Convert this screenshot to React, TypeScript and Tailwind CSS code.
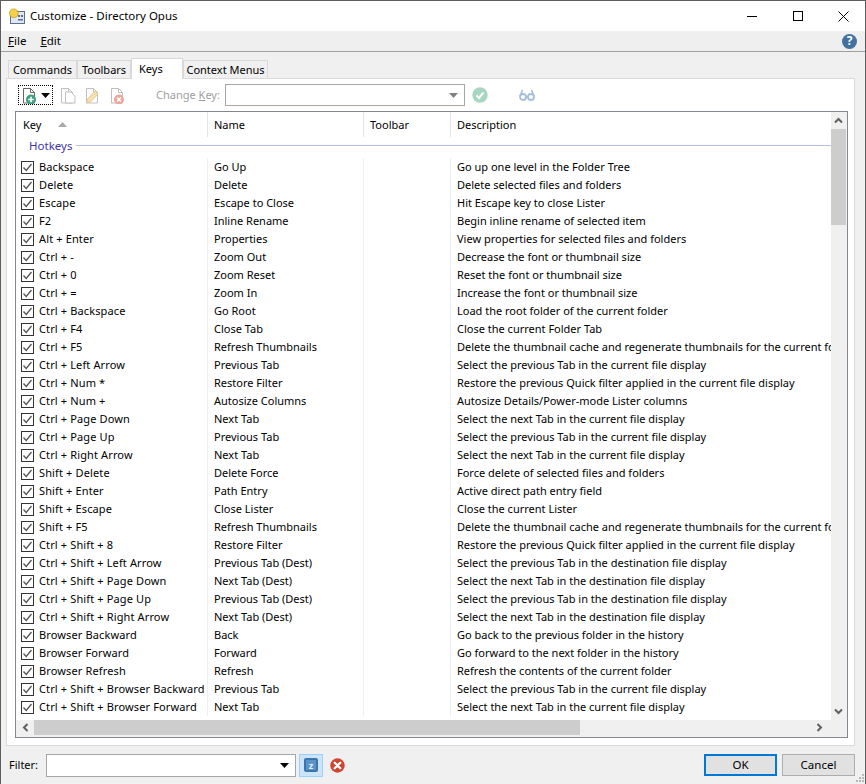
import type { ReactNode } from 'react'

const rows: [string, string, string][] = [
  ['Backspace', 'Go Up', 'Go up one level in the Folder Tree'],
  ['Delete', 'Delete', 'Delete selected files and folders'],
  ['Escape', 'Escape to Close', 'Hit Escape key to close Lister'],
  ['F2', 'Inline Rename', 'Begin inline rename of selected item'],
  ['Alt + Enter', 'Properties', 'View properties for selected files and folders'],
  ['Ctrl + -', 'Zoom Out', 'Decrease the font or thumbnail size'],
  ['Ctrl + 0', 'Zoom Reset', 'Reset the font or thumbnail size'],
  ['Ctrl + =', 'Zoom In', 'Increase the font or thumbnail size'],
  ['Ctrl + Backspace', 'Go Root', 'Load the root folder of the current folder'],
  ['Ctrl + F4', 'Close Tab', 'Close the current Folder Tab'],
  ['Ctrl + F5', 'Refresh Thumbnails', 'Delete the thumbnail cache and regenerate thumbnails for the current folder'],
  ['Ctrl + Left Arrow', 'Previous Tab', 'Select the previous Tab in the current file display'],
  ['Ctrl + Num *', 'Restore Filter', 'Restore the previous Quick filter applied in the current file display'],
  ['Ctrl + Num +', 'Autosize Columns', 'Autosize Details/Power-mode Lister columns'],
  ['Ctrl + Page Down', 'Next Tab', 'Select the next Tab in the current file display'],
  ['Ctrl + Page Up', 'Previous Tab', 'Select the previous Tab in the current file display'],
  ['Ctrl + Right Arrow', 'Next Tab', 'Select the next Tab in the current file display'],
  ['Shift + Delete', 'Delete Force', 'Force delete of selected files and folders'],
  ['Shift + Enter', 'Path Entry', 'Active direct path entry field'],
  ['Shift + Escape', 'Close Lister', 'Close the current Lister'],
  ['Shift + F5', 'Refresh Thumbnails', 'Delete the thumbnail cache and regenerate thumbnails for the current folder'],
  ['Ctrl + Shift + 8', 'Restore Filter', 'Restore the previous Quick filter applied in the current file display'],
  ['Ctrl + Shift + Left Arrow', 'Previous Tab (Dest)', 'Select the previous Tab in the destination file display'],
  ['Ctrl + Shift + Page Down', 'Next Tab (Dest)', 'Select the next Tab in the destination file display'],
  ['Ctrl + Shift + Page Up', 'Previous Tab (Dest)', 'Select the previous Tab in the destination file display'],
  ['Ctrl + Shift + Right Arrow', 'Next Tab (Dest)', 'Select the next Tab in the destination file display'],
  ['Browser Backward', 'Back', 'Go back to the previous folder in the history'],
  ['Browser Forward', 'Forward', 'Go forward to the next folder in the history'],
  ['Browser Refresh', 'Refresh', 'Refresh the contents of the current folder'],
  ['Ctrl + Shift + Browser Backward', 'Previous Tab', 'Select the previous Tab in the current file display'],
  ['Ctrl + Shift + Browser Forward', 'Next Tab', 'Select the next Tab in the current file display'],
]

function Tab({ label, active, className }: { label: string; active?: boolean; className: string }) {
  if (active) {
    return (
      <div className={`${className} h-[21px] -mb-px z-10 border border-b-0 border-[#d9d9d9] bg-white pl-[7px] pt-[1px] leading-[17px]`}>
        {label}
      </div>
    )
  }
  return (
    <div className={`${className} h-[18px] border border-b-0 border-[#d9d9d9] bg-[#f0f0f0] text-center leading-[18px]`}>
      {label}
    </div>
  )
}

function Check() {
  return (
    <svg width="13" height="13" viewBox="0 0 13 13" className="shrink-0">
      <rect x="0.5" y="0.5" width="12" height="12" fill="#fff" stroke="#333" />
      <path d="M2.5 6.5 L5.2 9.5 L10.5 3" fill="none" stroke="#555" strokeWidth="1.3" />
    </svg>
  )
}

function DocIcon({ stroke, children }: { stroke: string; children?: ReactNode }) {
  return (
    <svg width="16" height="18" viewBox="0 -1 16 18" className="shrink-0">
      <path d="M1.5 1.5 H8.5 L12.5 5.5 V16 H1.5 Z M8.5 1.5 V5.5 H12.5" fill="#fff" stroke={stroke} />
      {children}
    </svg>
  )
}

function RedCross({ size }: { size: number }) {
  return (
    <svg width={size} height={size} viewBox="0 0 16 16" className="shrink-0">
      <circle cx="8" cy="8" r="7.7" fill="#d0452f" />
      <path d="M5 5 L11 11 M11 5 L5 11" stroke="#fff" strokeWidth="2.4" strokeLinecap="round" />
    </svg>
  )
}

function Caret({ color = '#000' }: { color?: string }) {
  return (
    <svg width="9" height="5" viewBox="0 0 9 5" className="shrink-0">
      <path d="M0 0 H9 L4.5 5 Z" fill={color} />
    </svg>
  )
}

function Chevron({ d }: { d: string }) {
  return (
    <svg width="9" height="9" viewBox="0 0 9 9">
      <path d={d} fill="none" stroke="#606060" strokeWidth="2" />
    </svg>
  )
}

export default function App() {
  return (
    <div
      className="relative flex h-[784px] w-[866px] flex-col overflow-hidden border border-b-0 border-[#5e5e5e] bg-[#f0f0f0] text-[11px] text-black"
      style={{ fontFamily: '"Noto Sans", sans-serif' }}
    >
      {/* Title bar */}
      <div className="flex h-[30px] shrink-0 items-center bg-white pl-[8px]">
        <svg width="17" height="17" viewBox="0 0 17 17" className="shrink-0">
          <rect x="1.5" y="3.5" width="14" height="12" fill="#dfe7f3" stroke="#5b6f92" />
          <rect x="9" y="7" width="2" height="2" fill="#5b6f92" />
          <rect x="12" y="7" width="2" height="2" fill="#5b6f92" />
          <rect x="9" y="11" width="5" height="1.5" fill="#5b6f92" />
          <circle cx="4.8" cy="5.3" r="4.4" fill="#f4cf4a" stroke="#c79a1e" strokeWidth="0.7" />
        </svg>
        <span className="ml-[4px] text-[11.5px]">Customize - Directory Opus</span>
        <div className="ml-auto flex items-center">
          <div className="flex h-[30px] w-[46px] items-center justify-center">
            <div className="h-px w-[10px] bg-black" />
          </div>
          <div className="flex h-[30px] w-[46px] items-center justify-center">
            <div className="h-[10px] w-[10px] border border-black" />
          </div>
          <div className="flex h-[30px] w-[44px] items-center justify-center">
            <svg width="11" height="11" viewBox="0 0 11 11">
              <path d="M0.5 0.5 L10.5 10.5 M10.5 0.5 L0.5 10.5" stroke="#000" />
            </svg>
          </div>
        </div>
      </div>

      {/* Menu bar */}
      <div className="box-content flex h-[20px] shrink-0 items-center border-b border-[#a0a0a0] bg-[#efefef] pl-[7px] pr-[8px] text-[11.5px]">
        <span className="mr-[14px]"><span className="underline">F</span>ile</span>
        <span><span className="underline">E</span>dit</span>
        <div className="ml-auto flex h-[15px] w-[15px] items-center justify-center rounded-full bg-[#44729f] text-[12px] font-bold leading-none text-white">
          ?
        </div>
      </div>

      {/* Tabs */}
      <div className="flex h-[26px] shrink-0 items-end pl-[7px]">
        <Tab label="Commands" className="w-[69px]" />
        <Tab label="Toolbars" className="w-[54px]" />
        <Tab label="Keys" active className="w-[52px]" />
        <Tab label="Context Menus" className="w-[85px]" />
      </div>

      {/* Tab panel */}
      <div className="ml-[5px] mr-[10px] flex h-[668px] shrink-0 flex-col border border-[#d9d9d9] bg-white pb-[7px] pl-[8px] pr-[6px]">
        {/* Toolbar */}
        <div className="flex h-[32px] shrink-0 items-center pl-[3px]">
          <div className="flex h-[20px] w-[35px] items-center justify-center gap-[3px] border border-dotted border-black">
            <DocIcon stroke="#666">
              <circle cx="9" cy="12.5" r="5" fill="#3f9f80" />
              <path d="M6.2 12.5 H11.8 M9 9.7 V15.3" stroke="#fff" strokeWidth="1.6" />
            </DocIcon>
            <Caret />
          </div>
          <div className="ml-[7px] flex w-[96px] shrink-0 items-center gap-[9px]">
            <DocIcon stroke="#bfbfbf">
              <path d="M5.5 5 H11 L15 9 V16 H5.5 Z" fill="#fff" stroke="#bfbfbf" />
            </DocIcon>
            <DocIcon stroke="#bfbfbf">
              <path d="M1.5 16 L2.5 12 L10 4 L13 7 L5.5 15 Z" fill="#f4dfae" stroke="#e4c684" strokeWidth="0.8" />
            </DocIcon>
            <DocIcon stroke="#bfbfbf">
              <circle cx="9" cy="12.5" r="5" fill="#eba79c" />
              <path d="M7 10.5 L11 14.5 M11 10.5 L7 14.5" stroke="#fff" strokeWidth="1.5" />
            </DocIcon>
          </div>
          <span className="w-[69px] shrink-0 whitespace-nowrap text-[#a0a0a0]">
            Change <span className="underline">K</span>ey:
          </span>
          <div className="flex h-[22px] w-[240px] items-center justify-end border border-[#a6a6a6] pr-[6px]">
            <Caret color="#808080" />
          </div>
          <svg width="16" height="16" viewBox="0 0 16 16" className="ml-[7px] shrink-0">
            <circle cx="8" cy="8" r="7.7" fill="#a9d6c0" />
            <path d="M4.5 8.5 L7 11 L11.5 5.5" fill="none" stroke="#fff" strokeWidth="2" />
          </svg>
          <svg width="16" height="14" viewBox="0 0 16 14" className="ml-[31px] shrink-0">
            <circle cx="4" cy="9" r="3" fill="none" stroke="#a4bfdc" strokeWidth="1.8" />
            <circle cx="12" cy="9" r="3" fill="none" stroke="#a4bfdc" strokeWidth="1.8" />
            <path d="M1.2 8 L3.5 2 M14.8 8 L12.5 2 M7 8.5 H9" fill="none" stroke="#a4bfdc" strokeWidth="1.6" />
          </svg>
        </div>

        {/* Key list */}
        <div className="flex min-h-0 flex-1 flex-col border border-[#828790] bg-white">
          <div className="flex min-h-0 flex-1">
            <div className="min-w-0 flex-1 overflow-hidden">
              <div className="flex h-[25px] leading-[26px]">
                <div className="flex w-[192px] shrink-0 items-center border-r border-[#e5e5e5] pl-[7px]">
                  Key
                  <svg width="9" height="5" viewBox="0 0 9 5" className="ml-[17px]">
                    <path d="M0 5 H9 L4.5 0 Z" fill="#a8a8a8" />
                  </svg>
                </div>
                <div className="w-[156px] shrink-0 border-r border-[#e5e5e5] pl-[6px]">Name</div>
                <div className="w-[87px] shrink-0 border-r border-[#e5e5e5] pl-[6px]">Toolbar</div>
                <div className="pl-[6px]">Description</div>
              </div>
              <div className="flex h-[21px] items-start">
                <div className="flex h-[17px] flex-1 items-center pl-[13px] text-[11.5px]">
                  <span className="mt-[1px] text-[#3e36a8]">Hotkeys</span>
                  <div className="ml-[4px] h-px flex-1 bg-[#b3c1e8]" />
                </div>
              </div>
              {rows.map(([key, name, desc]) => (
                <div key={key} className="flex h-[18px] leading-[18px] whitespace-nowrap">
                  <div className="flex w-[192px] shrink-0 items-center gap-[5px] border-r border-[#e9f0fb] pl-[5px]">
                    <Check />
                    <span className="tracking-[0.13px]">{key}</span>
                  </div>
                  <div className="w-[156px] shrink-0 border-r border-[#e9f0fb] pl-[6px]">{name}</div>
                  <div className="w-[87px] shrink-0 border-r border-[#e9f0fb]" />
                  <div className="pl-[6px]">{desc}</div>
                </div>
              ))}
            </div>
            {/* Vertical scrollbar */}
            <div className="flex w-[16px] shrink-0 flex-col bg-[#f0f0f0] pr-[1px]">
              <div className="flex h-[17px] items-center justify-center">
                <Chevron d="M1 6.5 L4.5 3 L8 6.5" />
              </div>
              <div className="h-[96px] bg-[#cdcdcd]" />
              <div className="mt-auto flex h-[17px] items-center justify-center">
                <Chevron d="M1 2.5 L4.5 6 L8 2.5" />
              </div>
            </div>
          </div>
          {/* Horizontal scrollbar */}
          <div className="flex h-[17px] shrink-0 bg-[#f0f0f0] pb-[2px]">
            <div className="flex w-[18px] items-center justify-center">
              <Chevron d="M6.5 1 L3 4.5 L6.5 8" />
            </div>
            <div className="w-[546px] bg-[#cdcdcd]" />
            <div className="ml-auto mr-[20px] flex w-[15px] items-center justify-center">
              <Chevron d="M2.5 1 L6 4.5 L2.5 8" />
            </div>
          </div>
        </div>
      </div>

      {/* Filter bar */}
      <div className="flex flex-1 items-center pl-[8px] pr-[10px]">
        <span className="w-[37px] shrink-0">Filter:</span>
        <div className="flex h-[23px] w-[250px] shrink-0 items-center justify-end border border-[#a6a6a6] bg-white pr-[6px]">
          <Caret />
        </div>
        <div className="ml-[3px] flex h-[23px] w-[24px] items-center justify-center border border-[#99d1ff] bg-[#cce4f7]">
          <div className="flex h-[14px] w-[14px] items-center justify-center rounded-[2px] border-2 border-[#3a76ad] bg-[#5a94c8] text-[9px] font-bold leading-none text-[#e3eef8]">
            z
          </div>
        </div>
        <div className="ml-[7px]">
          <RedCross size={15} />
        </div>
        <div className="ml-auto flex h-[22px] w-[73px] items-center justify-center border-2 border-[#0078d7] bg-[#e1e1e1] text-[11.5px]">OK</div>
        <div className="ml-[5px] flex h-[22px] w-[73px] items-center justify-center border border-[#adadad] bg-[#e1e1e1] text-[11.5px]">Cancel</div>
      </div>

      {/* Resize grip */}
      <svg width="10" height="10" viewBox="0 0 10 10" className="absolute bottom-[1px] right-0">
        <path d="M7 1 h2 v2 h-2 Z M4 4 h2 v2 h-2 Z M7 4 h2 v2 h-2 Z M1 7 h2 v2 h-2 Z M4 7 h2 v2 h-2 Z M7 7 h2 v2 h-2 Z" fill="#b8b8b8" />
      </svg>
    </div>
  )
}
